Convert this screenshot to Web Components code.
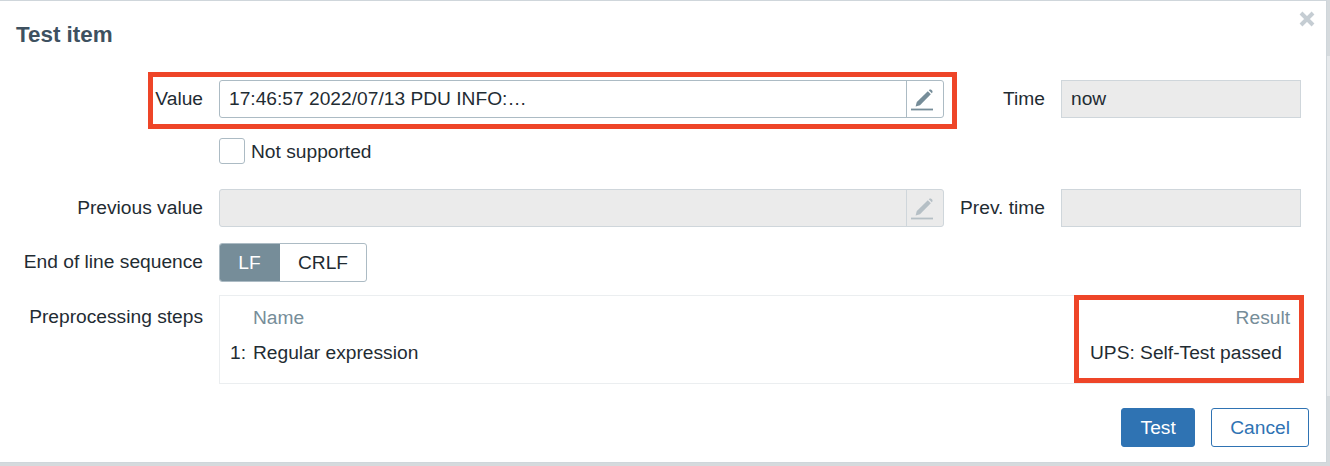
<!DOCTYPE html>
<html>
<head>
<meta charset="utf-8">
<title>Test item</title>
<style>
  html, body { margin: 0; height: 466px; overflow: hidden; }
  body { background: linear-gradient(#d5dadd 0 56px, #e6e9eb 56px 396px, #d5dadd 396px); font: 19.2px/22px "Liberation Sans", Arial, sans-serif; color: #1f2c33; }
</style>
</head>
<body>
<test-dialog heading="Test item">
  <form-row label="Value" aside="Time" style="--row-mb: 20px">
    <text-field value="17:46:57 2022/07/13 PDU INFO:…" editable></text-field>
    <plain-field slot="aside" value="now"></plain-field>
  </form-row>
  <form-row style="--row-mb: 25px; --row-h: 26px">
    <check-box>Not supported</check-box>
  </form-row>
  <form-row label="Previous value" aside="Prev. time" style="--row-mb: 16px">
    <text-field disabled></text-field>
    <plain-field slot="aside"></plain-field>
  </form-row>
  <form-row label="End of line sequence" style="--row-mb: 13px; --row-h: 39px; --label-pb: 2px">
    <segment-toggle></segment-toggle>
  </form-row>
  <form-row label="Preprocessing steps" style="--row-mb: 0; --row-h: 89px; --label-pt: 11px; --row-align: start">
    <steps-table></steps-table>
  </form-row>
  <ui-button slot="footer" primary>Test</ui-button>
  <ui-button slot="footer">Cancel</ui-button>
  <red-mark slot="overlay" style="left: 148px; top: 71px; width: 809px; height: 57px"></red-mark>
  <red-mark slot="overlay" style="left: 1074px; top: 294px; width: 230px; height: 88px"></red-mark>
</test-dialog>

<script>
class TestDialog extends HTMLElement {
  constructor() {
    super();
    this.attachShadow({ mode: "open" });
    this.shadowRoot.innerHTML = `
<style>
  :host { display: block; position: relative; box-sizing: border-box; width: 1327px; height: 463px;
    background: #fff; border: 1px solid #cfd6db; border-left: 0; }
  h2 { margin: 0; padding: 22px 0 0 16px; height: 57px; box-sizing: border-box; font: bold 22.4px/24px "Liberation Sans", Arial, sans-serif; color: #3e5160; }
  .body { display: flex; flex-direction: column; padding-top: 22px; }
  .close { position: absolute; left: 1299px; top: 10px; width: 16px; height: 16px; }
  footer { display: flex; justify-content: flex-end; gap: 16px; padding: 24px 17px 0 0; }
</style>
<h2></h2>
<svg class="close" viewBox="0 0 16 16"><path d="M2 2l12 12M14 2L2 14" stroke="#c5cdd3" stroke-width="4" fill="none"/></svg>
<div class="body"><slot></slot></div>
<footer><slot name="footer"></slot></footer>
<slot name="overlay"></slot>`;
  }
  connectedCallback() {
    this.shadowRoot.querySelector("h2").textContent = this.getAttribute("heading");
  }
}

class FormRow extends HTMLElement {
  constructor() {
    super();
    this.attachShadow({ mode: "open" });
    this.shadowRoot.innerHTML = `
<style>
  :host { display: grid; grid-template-columns: 203px 741px 117px 240px; align-items: var(--row-align, center);
    height: var(--row-h, 38px); margin-bottom: var(--row-mb, 0); }
  .label { text-align: right; padding-top: var(--label-pt, 0); padding-bottom: var(--label-pb, 0); }
  .main { margin-left: 16px; }
  .aside-label { text-align: right; padding-right: 16px; }
</style>
<div class="label"></div>
<div class="main"><slot></slot></div>
<div class="aside-label"></div>
<div><slot name="aside"></slot></div>`;
  }
  connectedCallback() {
    this.shadowRoot.querySelector(".label").textContent = this.getAttribute("label") ?? "";
    this.shadowRoot.querySelector(".aside-label").textContent = this.getAttribute("aside") ?? "";
  }
}

const pencil = `<svg width="22" height="23" viewBox="0 0 22 23"><path d="M4.6 18.4l1.2-4.4L16.8 3.2l3 3L9 17.2z" fill="currentColor"/><path d="M17.8 2.2l.3-.3c.6-.6 1.8-.6 2.4 0l.6.6c.6.6.6 1.8 0 2.4l-.3.3z" fill="currentColor"/><path d="M0 21.5h22" stroke="currentColor" stroke-width="1.8"/></svg>`;

class TextField extends HTMLElement {
  constructor() {
    super();
    this.attachShadow({ mode: "open" });
    this.shadowRoot.innerHTML = `
<style>
  :host { display: flex; box-sizing: border-box; height: 38px; width: 725px; background: #fff; border: 1px solid #acbbc4; border-radius: 3px; }
  :host([disabled]) { background: #ebebeb; border-color: #cfd6db; }
  .text { flex: 1; padding: 0 9px; line-height: 36px; white-space: nowrap; overflow: hidden; }
  button { all: unset; box-sizing: border-box; width: 37px; padding-right: 6px; border-left: 1px solid #acbbc4; display: flex; align-items: center; justify-content: center; color: #768d99; }
  :host([disabled]) button { border-color: #cfd6db; color: #b5bfc5; }
</style>
<div class="text"></div>
<button type="button">${pencil}</button>`;
  }
  connectedCallback() {
    this.shadowRoot.querySelector(".text").textContent = this.getAttribute("value") ?? "";
  }
}

class PlainField extends HTMLElement {
  constructor() {
    super();
    this.attachShadow({ mode: "open" });
    this.shadowRoot.innerHTML = `
<style>
  :host { display: block; box-sizing: border-box; height: 38px; width: 240px; padding: 0 9px; line-height: 36px; background: #ebebeb; border: 1px solid #cfd6db; }
</style>
<span></span>`;
  }
  connectedCallback() {
    this.shadowRoot.querySelector("span").textContent = this.getAttribute("value") ?? "";
  }
}

class CheckBox extends HTMLElement {
  constructor() {
    super();
    this.attachShadow({ mode: "open" });
    this.shadowRoot.innerHTML = `
<style>
  :host { display: flex; align-items: center; gap: 6px; }
  i { box-sizing: border-box; width: 26px; height: 26px; background: #fff; border: 1px solid #acbbc4; border-radius: 3px; }
  span { padding-top: 2px; }
</style>
<i></i><span><slot></slot></span>`;
  }
}

class SegmentToggle extends HTMLElement {
  constructor() {
    super();
    this.attachShadow({ mode: "open" });
    this.shadowRoot.innerHTML = `
<style>
  :host { display: inline-flex; box-sizing: border-box; height: 39px; border: 1px solid #acbbc4; border-radius: 3px; overflow: hidden; vertical-align: top; }
  span { line-height: 37px; text-align: center; }
  .on { width: 61px; margin: -1px 0 -1px -1px; line-height: 39px; background: #768d99; color: #fff; }
  .off { width: 86px; }
</style>
<span class="on">LF</span><span class="off">CRLF</span>`;
  }
}

class StepsTable extends HTMLElement {
  constructor() {
    super();
    this.attachShadow({ mode: "open" });
    this.shadowRoot.innerHTML = `
<style>
  :host { display: grid; box-sizing: border-box; width: 1082px; height: 89px; grid-template-columns: 23px 1fr 200px; grid-auto-rows: 35px;
    border: 1px solid #ebeef0; padding: 4px 10px 0 10px; align-items: center; }
  .th { color: #768d99; }
  .right { text-align: right; }
</style>
<span></span><span class="th">Name</span><span class="th right">Result</span>
<span>1:</span><span>Regular expression</span><span>UPS: Self-Test passed</span>`;
  }
}

class UiButton extends HTMLElement {
  constructor() {
    super();
    this.attachShadow({ mode: "open" });
    this.shadowRoot.innerHTML = `
<style>
  :host { display: block; box-sizing: border-box; height: 39px; padding: 0 18px; line-height: 37px; border: 1px solid #2f73b3; border-radius: 3px; color: #2f73b3; background: #fff; }
  :host([primary]) { padding: 0 18.5px; background: #2f73b3; color: #fff; }
</style>
<slot></slot>`;
  }
}

class RedMark extends HTMLElement {
  constructor() {
    super();
    this.attachShadow({ mode: "open" });
    this.shadowRoot.innerHTML = `
<style>
  :host { display: block; position: absolute; box-sizing: border-box; border: 5px solid #ee4528; pointer-events: none; }
</style>`;
  }
}

customElements.define("test-dialog", TestDialog);
customElements.define("form-row", FormRow);
customElements.define("text-field", TextField);
customElements.define("plain-field", PlainField);
customElements.define("check-box", CheckBox);
customElements.define("segment-toggle", SegmentToggle);
customElements.define("steps-table", StepsTable);
customElements.define("ui-button", UiButton);
customElements.define("red-mark", RedMark);
</script>
</body>
</html>
